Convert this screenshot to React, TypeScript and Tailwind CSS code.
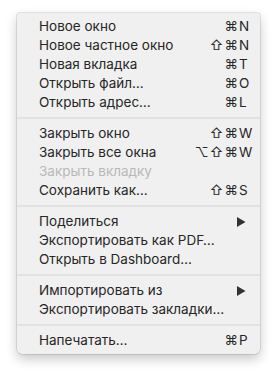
import React from "react";

type Item =
  | { sep: true }
  | { label: string; mods?: string; k?: string; disabled?: boolean; sub?: boolean; sep?: false };

const items: Item[] = [
  { label: "Новое окно", mods: "⌘", k: "N" },
  { label: "Новое частное окно", mods: "⇧⌘", k: "N" },
  { label: "Новая вкладка", mods: "⌘", k: "T" },
  { label: "Открыть файл…", mods: "⌘", k: "O" },
  { label: "Открыть адрес…", mods: "⌘", k: "L" },
  { sep: true },
  { label: "Закрыть окно", mods: "⇧⌘", k: "W" },
  { label: "Закрыть все окна", mods: "⌥⇧⌘", k: "W" },
  { label: "Закрыть вкладку", disabled: true },
  { label: "Сохранить как…", mods: "⇧⌘", k: "S" },
  { sep: true },
  { label: "Поделиться", sub: true },
  { label: "Экспортировать как PDF…" },
  { label: "Открыть в Dashboard…" },
  { sep: true },
  { label: "Импортировать из", sub: true },
  { label: "Экспортировать закладки…" },
  { sep: true },
  { label: "Напечатать…", mods: "⌘", k: "P" },
];

export default function App() {
  return (
    <div className="w-[277px] h-[375px] bg-white pt-[13px] pl-[17px]" style={{ fontFamily: "Inter, 'Noto Sans', sans-serif" }}>
      <div className="w-[243px] bg-[#f0f0f0] rounded-b-[5px] rounded-t-[2px] py-[4px] shadow-[0_0_0_0.5px_rgba(0,0,0,0.18),0_5px_12px_rgba(0,0,0,0.22)]">
        {items.map((it, i) =>
          it.sep ? (
            <div key={i} className="h-[12px] flex items-center">
              <div className="w-full h-[2px] bg-[#e2e2e2]" />
            </div>
          ) : (
            <div
              key={i}
              className={`h-[19px] flex items-center pl-[22px] pr-[8px] text-[13.5px] ${it.disabled ? "text-[#b8b8b8]" : "text-[#262626]"}`}
            >
              <span className="flex-1 whitespace-nowrap">{it.label}</span>
              {it.k && (
                <span className="flex items-center">
                  <span className="text-right tracking-[1px]">{it.mods}</span>
                  <span className="w-[13px]">{it.k}</span>
                </span>
              )}
              {it.sub && (
                <svg width="9" height="10" viewBox="0 0 9 10" className="mr-[6px]">
                  <path d="M0 0 L8.5 5 L0 10 Z" fill="#333" />
                </svg>
              )}
            </div>
          )
        )}
      </div>
    </div>
  );
}
